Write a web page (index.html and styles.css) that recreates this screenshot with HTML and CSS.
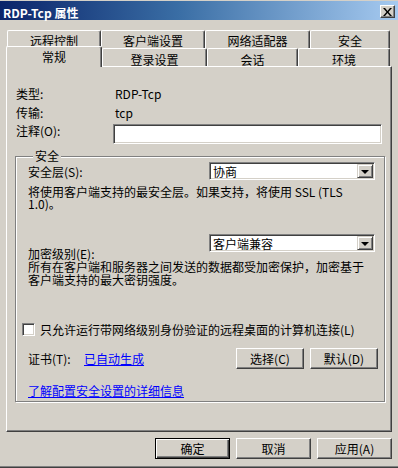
FILE: index.html
```html
<!DOCTYPE html>
<html lang="zh-CN">
<head>
<meta charset="utf-8">
<title>RDP-Tcp 属性</title>
<link rel="stylesheet" href="styles.css">
</head>
<body>
<div class="window">
  <div class="titlebar">
    <span class="title">RDP-Tcp 属性</span>
    <button class="close-btn" aria-label="关闭">
      <svg width="9" height="8" viewBox="0 0 9 8"><path d="M0 0h2l2.5 3 2.5-3h2L5.5 4 9 8H7L4.5 5 2 8H0l3.5-4z" fill="#000"/></svg>
    </button>
  </div>

  <div class="tabs">
    <div class="tab-row tab-row-back">
      <div class="tab tab-remote">远程控制</div>
      <div class="tab tab-client">客户端设置</div>
      <div class="tab tab-net">网络适配器</div>
      <div class="tab tab-sec">安全</div>
    </div>
    <div class="tab-row tab-row-front">
      <div class="tab tab-general active">常规</div>
      <div class="tab tab-logon">登录设置</div>
      <div class="tab tab-session">会话</div>
      <div class="tab tab-env">环境</div>
    </div>
  </div>

  <div class="panel">
    <div class="info-row"><span class="info-label">类型:</span><span class="info-value">RDP-Tcp</span></div>
    <div class="info-row"><span class="info-label">传输:</span><span class="info-value">tcp</span></div>
    <div class="info-row comment-row"><span class="info-label comment-label">注释(O):</span><input class="text-input" type="text"></div>

    <fieldset class="group">
      <legend class="group-legend">安全</legend>
      <div class="combo-row layer-row">
        <span class="combo-label">安全层(S):</span>
        <div class="combo"><span class="combo-text">协商</span><span class="combo-btn"><span class="arrow"></span></span></div>
      </div>
      <p class="desc desc-layer">将使用客户端支持的最安全层。如果支持，将使用 SSL (TLS<br>1.0)。</p>
      <div class="combo-row enc-row">
        <span class="combo-label enc-label">加密级别(E):</span>
        <div class="combo"><span class="combo-text">客户端兼容</span><span class="combo-btn"><span class="arrow"></span></span></div>
      </div>
      <p class="desc desc-enc">所有在客户端和服务器之间发送的数据都受加密保护，加密基于<br>客户端支持的最大密钥强度。</p>
      <label class="check-row"><span class="checkbox"></span><span>只允许运行带网络级别身份验证的远程桌面的计算机连接(L)</span></label>
      <div class="cert-row">
        <span class="cert-label">证书(T):</span>
        <a class="link" href="#">已自动生成</a>
        <span class="spacer"></span>
        <button class="btn cert-btn">选择(C)</button>
        <button class="btn cert-btn">默认(D)</button>
      </div>
      <div class="learn-row"><a class="link" href="#">了解配置安全设置的详细信息</a></div>
    </fieldset>
  </div>

  <div class="footer">
    <button class="btn footer-btn default-btn">确定</button>
    <button class="btn footer-btn">取消</button>
    <button class="btn footer-btn">应用(A)</button>
  </div>
  <div class="bottom-edge"></div>
</div>
</body>
</html>
```

FILE: styles.css
```css
* { box-sizing: border-box; }

html, body {
  margin: 0;
  padding: 0;
  background: #d4d0c8;
}

body {
  font-family: "Noto Sans CJK SC", "Noto Sans", sans-serif;
  font-size: 12px;
  color: #000;
}

.window {
  width: 398px;
  height: 468px;
  display: flex;
  flex-direction: column;
  background: #d4d0c8;
  overflow: hidden;
}

/* Title bar */
.titlebar {
  margin-top: 1px;
  height: 19px;
  display: flex;
  align-items: flex-start;
  background: linear-gradient(to right, #0a246a 0%, #3a6ea5 45%, #a6caf0 100%);
}

.title {
  margin: 5px 0 0 3px;
  line-height: 13px;
  color: #fff;
  font-weight: bold;
  flex: 1;
  white-space: nowrap;
}

.close-btn {
  margin: 4px 3px 0 0;
  width: 15px;
  height: 13px;
  padding: 0;
  display: flex;
  align-items: center;
  justify-content: center;
  background: #d4d0c8;
  border: 1px solid;
  border-color: #fff #404040 #404040 #fff;
  box-shadow: inset -1px -1px #808080;
}

/* Tabs */
.tabs {
  margin-top: 10px;
}

.tab-row {
  display: flex;
}

.tab-row-back {
  height: 18px;
  padding-left: 7px;
}

.tab-row-front {
  height: 20px;
  margin-top: -2px;
  padding-left: 6px;
  align-items: flex-end;
}

.tab {
  height: 18px;
  line-height: 13px;
  padding-top: 3px;
  text-align: center;
  white-space: nowrap;
  background: #d4d0c8;
  border-left: 1px solid #fff;
  border-top: 1px solid #fff;
  border-right: 1px solid #404040;
  border-radius: 2px 2px 0 0;
  box-shadow: inset -1px 0 #808080;
}

.tab-row-front .tab {
  padding-top: 4px;
}

.tab.active {
  height: 21px;
  margin-bottom: -1px;
  padding-top: 3px;
  position: relative;
  z-index: 1;
}

.tab-remote { width: 94px; }
.tab-client { width: 104px; }
.tab-net { width: 105px; }
.tab-sec { width: 80px; }

.tab-general { width: 96px; }
.tab-logon { width: 105px; }
.tab-session { width: 91px; }
.tab-env { width: 92px; }

/* Panel */
.panel {
  margin-left: 6px;
  width: 386px;
  height: 366px;
  padding: 17px 6px 0 9px;
  border-left: 1px solid #fff;
  border-top: 1px solid #fff;
  border-right: 1px solid #404040;
  border-bottom: 1px solid #404040;
  box-shadow: inset -1px -1px #808080;
}

.info-row {
  display: flex;
  align-items: center;
  height: 19px;
  line-height: 13px;
}

.info-label {
  width: 99px;
  flex: none;
}

.info-value {
  white-space: nowrap;
}

.comment-row {
  align-items: flex-start;
  height: 20px;
  margin-top: 2px;
}

.comment-label {
  width: 97px;
}

.text-input {
  width: 269px;
  height: 20px;
  margin: 0;
  padding: 0 3px;
  font: inherit;
  background: #fff;
  border: 1px solid;
  border-color: #808080 #fff #fff #808080;
  box-shadow: inset 1px 1px #404040, inset -1px -1px #d4d0c8;
  outline: none;
}

/* Group box */
.group {
  margin: 5px 0 0 -1px;
  padding: 0 8px 4px 12px;
  min-width: 0;
  width: 370px;
  border: 1px solid #808080;
  box-shadow: inset 1px 1px #fff, 1px 1px #fff;
}

.group-legend {
  margin-left: 5px;
  padding: 0 2px;
  line-height: 14px;
  background: #d4d0c8;
}

.combo-row {
  display: flex;
  align-items: center;
  height: 18px;
  line-height: 13px;
}

.layer-row {
  margin-top: -1px;
}

.combo-label {
  width: 181px;
  flex: none;
  white-space: nowrap;
}

.enc-row {
  margin-top: 24px;
  height: 26px;
  align-items: flex-start;
}

.enc-label {
  margin-top: 13px;
}

.combo {
  width: 166px;
  height: 18px;
  display: flex;
  align-items: center;
  background: #fff;
  border: 1px solid;
  border-color: #808080 #fff #fff #808080;
  box-shadow: inset 1px 1px #404040, inset -1px -1px #d4d0c8;
  padding: 1px 1px 1px 3px;
}

.combo-text {
  flex: 1;
  line-height: 13px;
  white-space: nowrap;
}

.combo-btn {
  width: 16px;
  height: 14px;
  display: flex;
  align-items: center;
  justify-content: center;
  background: #d4d0c8;
  border: 1px solid;
  border-color: #d4d0c8 #404040 #404040 #d4d0c8;
  box-shadow: inset 1px 1px #fff, inset -1px -1px #808080;
}

.arrow {
  width: 0;
  height: 0;
  border-left: 4px solid transparent;
  border-right: 4px solid transparent;
  border-top: 4px solid #000;
  margin-top: 1px;
}

.desc {
  margin: 0;
  white-space: nowrap;
}

.desc-layer {
  margin-top: 6px;
  line-height: 12px;
}

.desc-enc {
  line-height: 13px;
}

.check-row {
  margin: 36px 0 0 -6px;
  height: 14px;
  display: flex;
  align-items: center;
  gap: 5px;
  line-height: 13px;
  white-space: nowrap;
}

.checkbox {
  width: 13px;
  height: 13px;
  flex: none;
  background: #fff;
  border: 1px solid;
  border-color: #808080 #fff #fff #808080;
  box-shadow: inset 1px 1px #404040, inset -1px -1px #d4d0c8;
}

.cert-row {
  margin: 12px -2px 0 0;
  height: 21px;
  display: flex;
  align-items: center;
  line-height: 13px;
}

.cert-label {
  width: 56px;
  flex: none;
}

.spacer {
  flex: 1;
}

.link {
  color: #0000ff;
  text-decoration: underline;
  white-space: nowrap;
}

.learn-row {
  margin-top: 15px;
  line-height: 13px;
}

/* Buttons */
.btn {
  margin: 0;
  padding: 0;
  font: inherit;
  line-height: 13px;
  color: #000;
  background: #d4d0c8;
  border: 1px solid;
  border-color: #fff #404040 #404040 #fff;
  box-shadow: inset -1px -1px #808080;
  white-space: nowrap;
}

.cert-btn {
  width: 68px;
  height: 21px;
}

.cert-btn + .cert-btn {
  margin-left: 6px;
}

.footer {
  margin-top: 6px;
  padding-right: 6px;
  display: flex;
  justify-content: flex-end;
  gap: 6px;
}

.footer-btn {
  width: 75px;
  height: 21px;
}

.default-btn {
  border-color: #000;
  box-shadow: inset 1px 1px #fff, inset -1px -1px #404040, inset -2px -2px #808080;
}

.bottom-edge {
  margin-top: auto;
  height: 2px;
  border-top: 1px solid #808080;
  border-bottom: 1px solid #404040;
}
```
